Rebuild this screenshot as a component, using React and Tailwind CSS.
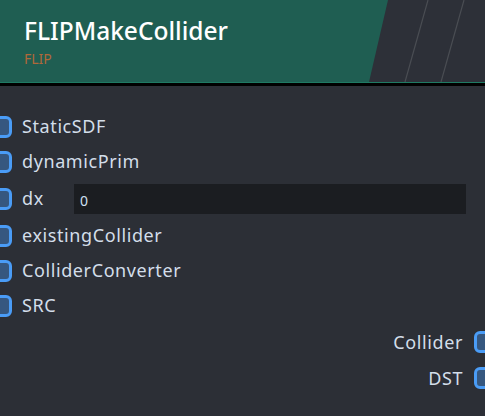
import React from 'react';

const inputs = ['StaticSDF', 'dynamicPrim', 'dx', 'existingCollider', 'ColliderConverter', 'SRC'];
const outputs = ['Collider', 'DST'];

const Socket = ({ side }) => (
  <div
    className={`absolute top-1/2 -translate-y-1/2 w-[23px] h-[22px] rounded-[6px] border-[3px] border-[#4a9cf6] bg-[#36577f] ${
      side === 'left' ? '-left-[11px]' : '-right-[12px]'
    }`}
  />
);

const App = () => {
  return (
    <div className="w-[485px] h-[416px] bg-[#2c2f36] overflow-hidden font-['Noto_Sans','Open_Sans',sans-serif]">
      {/* header */}
      <div className="relative h-[82px] bg-[#2d3038]">
        <svg className="absolute inset-0" width="485" height="82" viewBox="0 0 485 82">
          <polygon points="0,0 388,0 369,82 0,82" fill="#1f5e52" />
          <line x1="428" y1="0" x2="405" y2="82" stroke="#4a4d53" strokeWidth="1.2" />
          <line x1="464" y1="0" x2="441" y2="82" stroke="#4a4d53" strokeWidth="1.2" />
        </svg>
        <div className="relative pl-[24px] pt-[15px]">
          <div className="text-[24.5px] leading-[32px] font-medium text-white">FLIPMakeCollider</div>
          <div className="text-[14px] leading-[18px] mt-[3px] text-[#b0683a]">FLIP</div>
        </div>
      </div>
      <div className="h-px bg-[#1f7a63]" />
      <div className="h-[3px] bg-black" />

      {/* inputs */}
      <div className="flex flex-col pt-[23px]">
        {inputs.map((name) => (
          <div
            key={name}
            className={`relative flex items-center pl-[22px] ${name === 'dx' ? 'h-[39px]' : 'h-[35px]'}`}
          >
            <Socket side="left" />
            <span className="text-[18px] tracking-[0.6px] text-[#d3deea] w-[52px] shrink-0">{name}</span>
            {name === 'dx' && (
              <div className="flex-1 mr-[19px] h-[30px] bg-[#1b1d21] flex items-center pl-[6px] pt-[3px] text-[14px] text-[#cfe0f4]">
                0
              </div>
            )}
          </div>
        ))}
      </div>

      {/* outputs */}
      <div className="flex flex-col items-end pt-[1px]">
        {outputs.map((name) => (
          <div key={name} className="relative flex items-center justify-end pr-[22px] h-[36px] w-full">
            <span className="text-[18px] tracking-[0.6px] text-[#d3deea]">{name}</span>
            <Socket side="right" />
          </div>
        ))}
      </div>
    </div>
  );
};

export default App;
